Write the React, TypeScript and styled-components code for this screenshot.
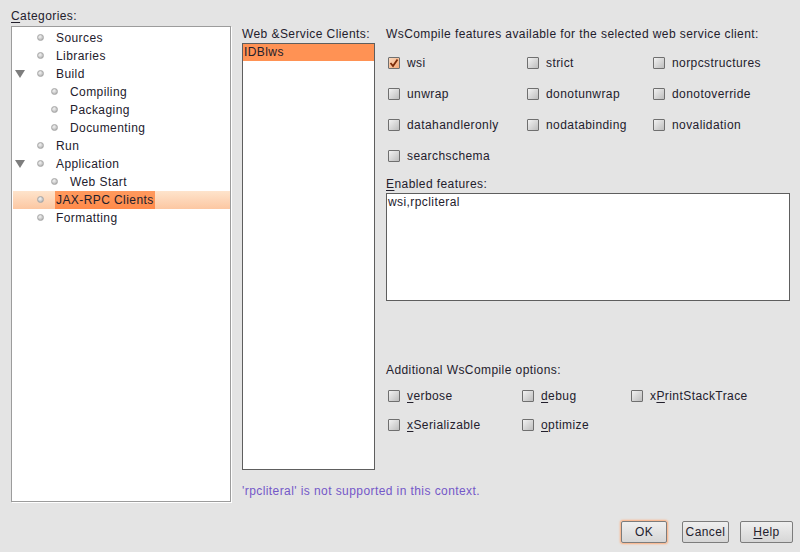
import { createGlobalStyle } from "styled-components";
import styled from "styled-components";

const GlobalStyle = createGlobalStyle`
  html, body {
    margin: 0;
    padding: 0;
    background: #e4e4e4;
  }
  * {
    box-sizing: border-box;
  }
`;

interface TreeItem {
  label: string;
  level: number;
  expanded?: boolean;
  selected?: boolean;
}

const treeItems: TreeItem[] = [
  { label: "Sources", level: 1 },
  { label: "Libraries", level: 1 },
  { label: "Build", level: 1, expanded: true },
  { label: "Compiling", level: 2 },
  { label: "Packaging", level: 2 },
  { label: "Documenting", level: 2 },
  { label: "Run", level: 1 },
  { label: "Application", level: 1, expanded: true },
  { label: "Web Start", level: 2 },
  { label: "JAX-RPC Clients", level: 1, selected: true },
  { label: "Formatting", level: 1 },
];

const features: { name: string; checked?: boolean }[] = [
  { name: "wsi", checked: true },
  { name: "strict" },
  { name: "norpcstructures" },
  { name: "unwrap" },
  { name: "donotunwrap" },
  { name: "donotoverride" },
  { name: "datahandleronly" },
  { name: "nodatabinding" },
  { name: "novalidation" },
  { name: "searchschema" },
];

// mnemonic index marks the underlined letter
const options: { name: string; mnemonic: number }[] = [
  { name: "verbose", mnemonic: 0 },
  { name: "debug", mnemonic: 0 },
  { name: "xPrintStackTrace", mnemonic: 1 },
  { name: "xSerializable", mnemonic: 0 },
  { name: "optimize", mnemonic: 0 },
];

function Mnemonic({ text, index }: { text: string; index: number }) {
  return (
    <>
      {text.slice(0, index)}
      <U>{text[index]}</U>
      {text.slice(index + 1)}
    </>
  );
}

function CheckBox({ checked }: { checked?: boolean }) {
  return (
    <Box $checked={checked}>
      {checked && (
        <svg width="10" height="10" viewBox="0 0 10 10">
          <path d="M1.5 5 L4 8 L8.5 1.5" fill="none" stroke="#7a2a08" strokeWidth="1.8" />
        </svg>
      )}
    </Box>
  );
}

export default function App() {
  return (
    <>
      <GlobalStyle />
      <Dialog>
        <Main>
          <LeftColumn>
            <Label>
              <Mnemonic text="Categories:" index={0} />
            </Label>
            <Tree>
              {treeItems.map((item) => (
                <TreeRow key={item.label} $level={item.level} $selected={item.selected}>
                  <ExpanderSlot>{item.expanded && <Triangle />}</ExpanderSlot>
                  <Bullet />
                  <TreeLabel $selected={item.selected}>{item.label}</TreeLabel>
                </TreeRow>
              ))}
            </Tree>
          </LeftColumn>

          <RightArea>
            <TopRow>
              <ClientsColumn>
                <Label>Web &amp;Service Clients:</Label>
                <List>
                  <ListItem $selected>IDBlws</ListItem>
                </List>
              </ClientsColumn>

              <FeaturesColumn>
                <Label>WsCompile features available for the selected web service client:</Label>
                <FeatureGrid>
                  {features.map((f) => (
                    <CheckItem key={f.name}>
                      <CheckBox checked={f.checked} />
                      <span>{f.name}</span>
                    </CheckItem>
                  ))}
                </FeatureGrid>

                <SectionLabel>
                  <Mnemonic text="Enabled features:" index={0} />
                </SectionLabel>
                <TextArea>wsi,rpcliteral</TextArea>

                <OptionsLabel>Additional WsCompile options:</OptionsLabel>
                <OptionGrid>
                  {options.map((o) => (
                    <CheckItem key={o.name}>
                      <CheckBox />
                      <span>
                        <Mnemonic text={o.name} index={o.mnemonic} />
                      </span>
                    </CheckItem>
                  ))}
                </OptionGrid>
              </FeaturesColumn>
            </TopRow>

            <ErrorText>'rpcliteral' is not supported in this context.</ErrorText>
          </RightArea>
        </Main>

        <ButtonBar>
          <Button $focused $width={46} $gap={0}>OK</Button>
          <Button $width={47} $gap={15}>Cancel</Button>
          <Button $width={53} $gap={11}>
            <Mnemonic text="Help" index={0} />
          </Button>
        </ButtonBar>
      </Dialog>
    </>
  );
}

const Dialog = styled.div`
  width: 800px;
  height: 552px;
  padding: 8px 7px 9px 11px;
  display: flex;
  flex-direction: column;
  background: #e4e4e4;
  font-family: "Liberation Sans", Arial, sans-serif;
  font-size: 12px;
  color: #23202c;
  letter-spacing: 0.42px;
`;

const Main = styled.div`
  flex: 1;
  display: flex;
  gap: 11px;
`;

const LeftColumn = styled.div`
  width: 220px;
  display: flex;
  flex-direction: column;
`;

const Label = styled.div`
  height: 16px;
  line-height: 16px;
  white-space: nowrap;
`;

const U = styled.span`
  text-decoration: underline;
  text-underline-offset: 2px;
`;

const Tree = styled.div`
  margin-top: 2px;
  height: 476px;
  background: #fff;
  border: 1px solid #9c9c9c;
  box-shadow: 1px 1px 0 #fff;
  padding-top: 2px;
`;

const TreeRow = styled.div<{ $level: number; $selected?: boolean }>`
  height: 18px;
  margin: 0 0 0 1px;
  display: flex;
  align-items: center;
  padding-left: ${({ $level }) => ($level - 1) * 14}px;
  background: ${({ $selected }) =>
    $selected ? "linear-gradient(#fee4cc, #fcc7a2)" : "transparent"};
`;

const ExpanderSlot = styled.div`
  width: 24px;
  height: 18px;
  display: flex;
  align-items: center;
  padding-left: 2px;
`;

const Triangle = styled.div`
  width: 0;
  height: 0;
  border-left: 5px solid transparent;
  border-right: 5px solid transparent;
  border-top: 8px solid #7d7d7d;
`;

const Bullet = styled.div`
  width: 7px;
  height: 7px;
  border-radius: 50%;
  margin-top: -1px;
  background: radial-gradient(circle at 40% 35%, #f4f4f4 0%, #c4c4c4 60%, #9a9a9a 100%);
  border: 1px solid #a8a8a8;
`;

const TreeLabel = styled.span<{ $selected?: boolean }>`
  margin-left: 11px;
  padding: 0 1px;
  height: 18px;
  line-height: 18px;
  white-space: nowrap;
  background: ${({ $selected }) => ($selected ? "linear-gradient(#ff9a5e, #ff8a4a)" : "transparent")};
`;

const RightArea = styled.div`
  flex: 1;
  display: flex;
  flex-direction: column;
  padding-top: 18px;
`;

const TopRow = styled.div`
  display: flex;
  gap: 11px;
`;

const ClientsColumn = styled.div`
  width: 133px;
  display: flex;
  flex-direction: column;
`;

const List = styled.div`
  margin-top: 1px;
  height: 427px;
  background: #fff;
  border: 1px solid #5e5e5e;
`;

const ListItem = styled.div<{ $selected?: boolean }>`
  height: 17px;
  line-height: 17px;
  padding-left: 1px;
  background: ${({ $selected }) => ($selected ? "#ff9254" : "transparent")};
`;

const FeaturesColumn = styled.div`
  width: 404px;
  display: flex;
  flex-direction: column;
`;

const FeatureGrid = styled.div`
  margin-top: 5px;
  display: grid;
  grid-template-columns: 139px 126px 1fr;
  grid-auto-rows: 31px;
`;

const CheckItem = styled.div`
  display: flex;
  align-items: center;
  gap: 7px;
  padding-left: 2px;
  white-space: nowrap;
`;

const Box = styled.div<{ $checked?: boolean }>`
  width: 12px;
  height: 12px;
  flex-shrink: 0;
  display: flex;
  align-items: center;
  justify-content: center;
  border: 1px solid #6f6f6f;
  border-radius: 1px;
  background: ${({ $checked }) =>
    $checked
      ? "linear-gradient(135deg, #fbd9bd, #f3a878)"
      : "linear-gradient(135deg, #f2f2f2, #bdbdbd)"};
`;

const SectionLabel = styled(Label)`
  margin-top: 5px;
`;

const TextArea = styled.div`
  margin-top: 1px;
  height: 108px;
  background: #fff;
  border: 1px solid #5e5e5e;
  padding: 1px 0 0 1px;
  line-height: 14px;
`;

const OptionsLabel = styled(Label)`
  margin-top: 61px;
`;

const OptionGrid = styled.div`
  margin-top: 3px;
  display: grid;
  grid-template-columns: 134px 109px 1fr;
  grid-auto-rows: 29px;
`;

const ErrorText = styled.div`
  margin-top: 13px;
  height: 16px;
  line-height: 16px;
  color: #7458c8;
`;

const ButtonBar = styled.div`
  display: flex;
  justify-content: flex-end;
  align-items: center;
  height: 22px;
  margin-top: -1px;
`;

const Button = styled.button<{ $focused?: boolean; $width: number; $gap: number }>`
  width: ${({ $width }) => $width}px;
  height: 22px;
  margin-left: ${({ $gap }) => $gap}px;
  padding: 0;
  font-family: inherit;
  font-size: 12px;
  letter-spacing: 0.42px;
  color: #23202c;
  border: 1px solid #7c7c7c;
  border-radius: 2px;
  background: linear-gradient(#efefef, #d6d6d6);
  box-shadow: ${({ $focused }) => ($focused ? "0 0 2px 1px #ffad7a" : "none")};
`;
